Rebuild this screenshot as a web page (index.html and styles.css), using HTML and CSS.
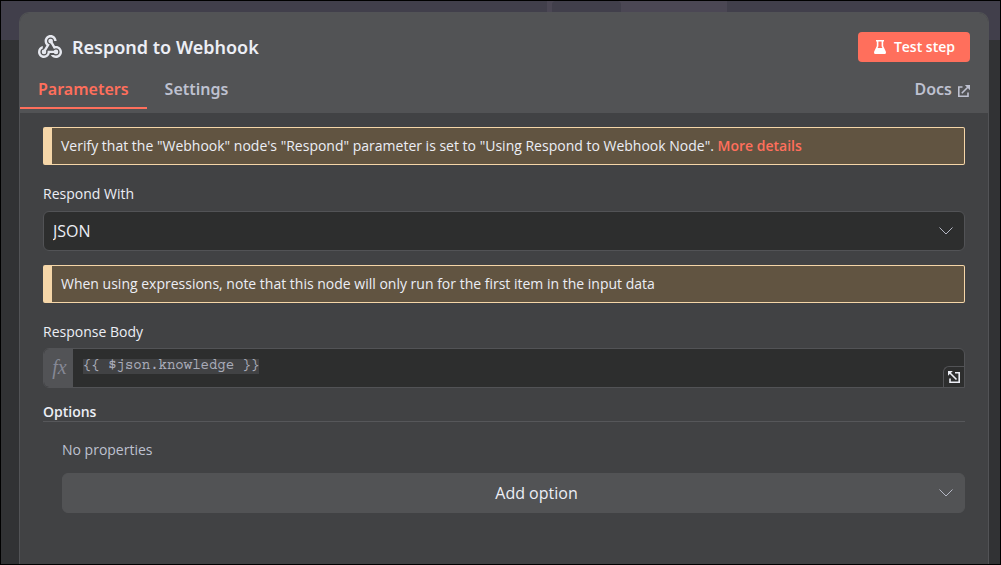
FILE: index.html
```html
<!DOCTYPE html>
<html lang="en">
<head>
<meta charset="utf-8">
<meta name="viewport" content="width=device-width, initial-scale=1">
<title>Respond to Webhook</title>
<link rel="stylesheet" href="styles.css">
</head>
<body>
<div class="backdrop">
  <div class="backdrop-bar"><div class="backdrop-tabs"><div class="backdrop-tab"></div></div></div>
</div>
<main class="panel">
  <header class="panel-header">
    <div class="title-row">
      <svg class="node-icon" viewBox="2 2 20 19" aria-hidden="true"><path d="M10 15h5.88c.27-.31.67-.5 1.12-.5.83 0 1.5.67 1.5 1.5s-.67 1.5-1.5 1.5c-.44 0-.84-.19-1.12-.5H11.9c-.46 2.28-2.48 4-4.9 4-2.76 0-5-2.24-5-5 0-2.42 1.72-4.44 4-4.9v2.07c-1.16.41-2 1.53-2 2.83 0 1.65 1.35 3 3 3s3-1.35 3-3v-1zm2.5-11c1.65 0 3 1.35 3 3h2c0-2.76-2.24-5-5-5s-5 2.24-5 5c0 1.43.6 2.71 1.55 3.62l-2.35 3.9c-.68.14-1.2.75-1.2 1.48 0 .83.67 1.5 1.5 1.5s1.5-.67 1.5-1.5c0-.16-.02-.31-.07-.45l3.38-5.63C10.49 9.61 9.5 8.42 9.5 7c0-1.65 1.35-3 3-3zm4.5 9c-.64 0-1.23.2-1.72.54l-3.05-5.07C11.53 8.35 11 7.74 11 7c0-.83.67-1.5 1.5-1.5S14 6.17 14 7c0 .15-.02.29-.06.43l2.19 3.65c.28-.05.57-.08.87-.08 2.76 0 5 2.24 5 5s-2.24 5-5 5c-1.85 0-3.47-1.01-4.33-2.5h2.67c.48.32 1.05.5 1.66.5 1.65 0 3-1.35 3-3s-1.35-3-3-3z"/><circle cx="12.500" cy="7" r="1.900"/><circle cx="7" cy="16" r="1.900"/><circle cx="17" cy="16" r="1.900"/></svg>
      <h1 class="title">Respond to Webhook</h1>
      <button class="test-button" type="button">
        <svg class="flask-icon" viewBox="0 0 12 14" aria-hidden="true"><path fill-rule="evenodd" d="M2 0h8v1.600H9.200V6l2.600 5.600c.5 1.200-.2 2.400-1.500 2.400H1.700C.4 14-.3 12.800.2 11.600L2.800 6V1.600H2zM4.400 1.600V6.300L3.600 8h4.800L7.600 6.300V1.600z"/></svg>
        Test step
      </button>
    </div>
    <nav class="tabs">
      <a class="tab tab-active" href="#parameters">Parameters</a>
      <a class="tab" href="#settings">Settings</a>
      <a class="tab tab-docs" href="#docs">Docs
        <svg class="link-icon" viewBox="0 0 12 12" aria-hidden="true"><path d="M4.500 2H.8v9.200H10V7.500M3.800 8.200 10 2"/><path class="solid" d="M6.800 0H12v5.200z"/></svg>
      </a>
    </nav>
  </header>
  <form class="panel-body" id="parameters">
    <p class="notice">Verify that the "Webhook" node's "Respond" parameter is set to "Using Respond to Webhook Node". <a class="notice-link" href="#details">More details</a></p>
    <div class="field">
      <label class="label" for="respond-with">Respond With</label>
      <div class="select-wrap">
        <select class="select" id="respond-with"><option>JSON</option></select>
        <svg class="chevron" viewBox="0 0 14 8" aria-hidden="true"><path d="M.5.500 7 7 13.500.500"/></svg>
      </div>
    </div>
    <p class="notice">When using expressions, note that this node will only run for the first item in the input data</p>
    <div class="field field-expression">
      <label class="label" for="response-body">Response Body</label>
      <div class="expression">
        <span class="fx" aria-hidden="true">fx</span>
        <div class="editor">
          <input class="code" id="response-body" type="text" value="{{ $json.knowledge }}" spellcheck="false">
        </div>
        <button class="expand" type="button" aria-label="Open editor">
          <svg class="expand-icon" viewBox="0 0 12 12" aria-hidden="true"><path d="M7 1.700h4.200v9.500H2V7.500M2 2l6.500 6.500"/><path class="solid" d="M0 0h4.800L0 4.800z"/></svg>
        </button>
      </div>
    </div>
    <section class="options">
      <h2 class="options-title">Options</h2>
      <div class="options-content">
        <p class="empty">No properties</p>
        <div class="select-wrap">
          <select class="select add-option" aria-label="Add option"><option>Add option</option></select>
          <svg class="chevron" viewBox="0 0 14 8" aria-hidden="true"><path d="M.5.500 7 7 13.500.500"/></svg>
        </div>
      </div>
    </section>
  </form>
</main>
</body>
</html>
```
FILE: styles.css
```css
* { box-sizing: border-box; }

body {
  position: relative;
  display: flex;
  min-height: 100vh;
  margin: 0;
  padding: 11px 11px 0 18px;
  border: 1px solid #000;
  background: #313234;
  color: #eceef5;
  font-family: "Open Sans", "Noto Sans", sans-serif;
  font-size: 14px;
  line-height: 20px;
}

h1, h2, p { margin: 0; }
a { color: inherit; text-decoration: none; }

/* Dimmed application bar behind the panel */
.backdrop { position: absolute; inset: 0; }
.backdrop-bar { height: 39px; background: #413f4b; }
.backdrop-tabs { width: 18%; height: 100%; margin-left: 54.700%; padding-left: 5px; background: #4b4754; }
.backdrop-tab { width: 69px; height: 100%; border-radius: 4px 4px 0 0; background: #413f4b; }

.panel {
  position: relative;
  display: flex;
  flex: 1;
  flex-direction: column;
  min-width: 0;
  border: 1px solid #525356;
  border-bottom: 0;
  border-radius: 10px 10px 0 0;
  background: #414244;
}

.panel-header { border-radius: 9px 9px 0 0; background: #525355; }
.title-row { display: flex; align-items: center; padding: 19px 18px 0; }
.node-icon { width: 24px; height: 23px; margin-bottom: 2px; fill: #e6e8ef; }
.title { flex: 1; margin-left: 10px; font-family: "Noto Sans", "Open Sans", sans-serif; font-size: 18px; font-weight: 600; line-height: 24px; }

.test-button {
  display: flex;
  align-items: center;
  gap: 8px;
  height: 30px;
  padding: 0 15px 0 16px;
  border: 0;
  border-radius: 4px;
  background: #ff6f5c;
  color: #fff;
  font: inherit;
  font-weight: 600;
}
.flask-icon { width: 12px; height: 14px; fill: #fff; }

.tabs { display: flex; height: 51px; padding-bottom: 4px; font-family: "Noto Sans", "Open Sans", sans-serif; font-size: 16px; font-weight: 600; color: #bec1d0; }
.tab { display: flex; align-items: center; padding: 6px 18px 0; }
.tab-active { border-bottom: 2px solid #ff6f5c; padding-top: 8px; color: #ff6f5c; }
.tab-docs { gap: 6px; margin-left: auto; }

.link-icon, .expand-icon { width: 12px; height: 12px; fill: none; stroke: currentColor; stroke-width: 1.6; }
.solid { fill: currentColor; stroke: none; }
.link-icon { margin-top: 4px; }

.panel-body { flex: 1; padding: 14px 23px 30px; }

.notice {
  padding: 8px 9px;
  border: 1px solid #f5d6a8;
  border-left-width: 9px;
  border-radius: 2px;
  background: #615441;
}
.notice-link { color: #ff6f5c; font-weight: 600; }

.field { padding: 19px 0 14px; }
.label { display: block; margin-bottom: 7px; }
.field-expression .label { margin-bottom: 6px; }

.select-wrap { position: relative; }
.select {
  display: block;
  width: 100%;
  height: 40px;
  padding: 0 9px;
  border: 1px solid #525356;
  border-radius: 6px;
  appearance: none;
  background: #2d2e2e;
  color: #eceef5;
  font: inherit;
  font-size: 16px;
}
.chevron {
  position: absolute;
  top: 16px;
  right: 12px;
  width: 14px;
  height: 8px;
  fill: none;
  stroke: #b4b7c4;
  pointer-events: none;
}

.expression {
  position: relative;
  display: flex;
  height: 40px;
  border: 1px solid #525356;
  border-radius: 6px 6px 0 6px;
  background: #2d2e2e;
  overflow: hidden;
}
.fx {
  width: 29px;
  padding-left: 2px;
  background: #525356;
  color: #858895;
  font: italic 20px/36px "Liberation Serif", serif;
  text-align: center;
}
.editor { flex: 1; padding: 10px; }
.code {
  display: block;
  width: 21ch;
  height: 15px;
  padding: 0 0 1px;
  border: 0;
  background: #414244;
  color: #a9acb9;
  font: 14px/14px "Courier 10 Pitch", "Courier Prime", FreeMono, "Liberation Mono", monospace;
}
.expand {
  position: absolute;
  right: 0;
  bottom: 0;
  display: grid;
  place-items: center;
  width: 21px;
  height: 21px;
  padding: 0;
  border: solid #525356;
  border-width: 1px 0 0 1px;
  border-radius: 6px 0 0;
  background: #2d2e2e;
  color: #eceef5;
}

.options-title { border-bottom: 1px solid #56575a; font-size: 14px; font-weight: 600; line-height: 19px; }
.options-content { padding: 18px 0 0 19px; }
.empty { margin-bottom: 13px; color: #bec1d0; }
.add-option { padding: 0 9px 0 55px; border-color: #525355; background: #525355; text-align: center; text-align-last: center; }
```
